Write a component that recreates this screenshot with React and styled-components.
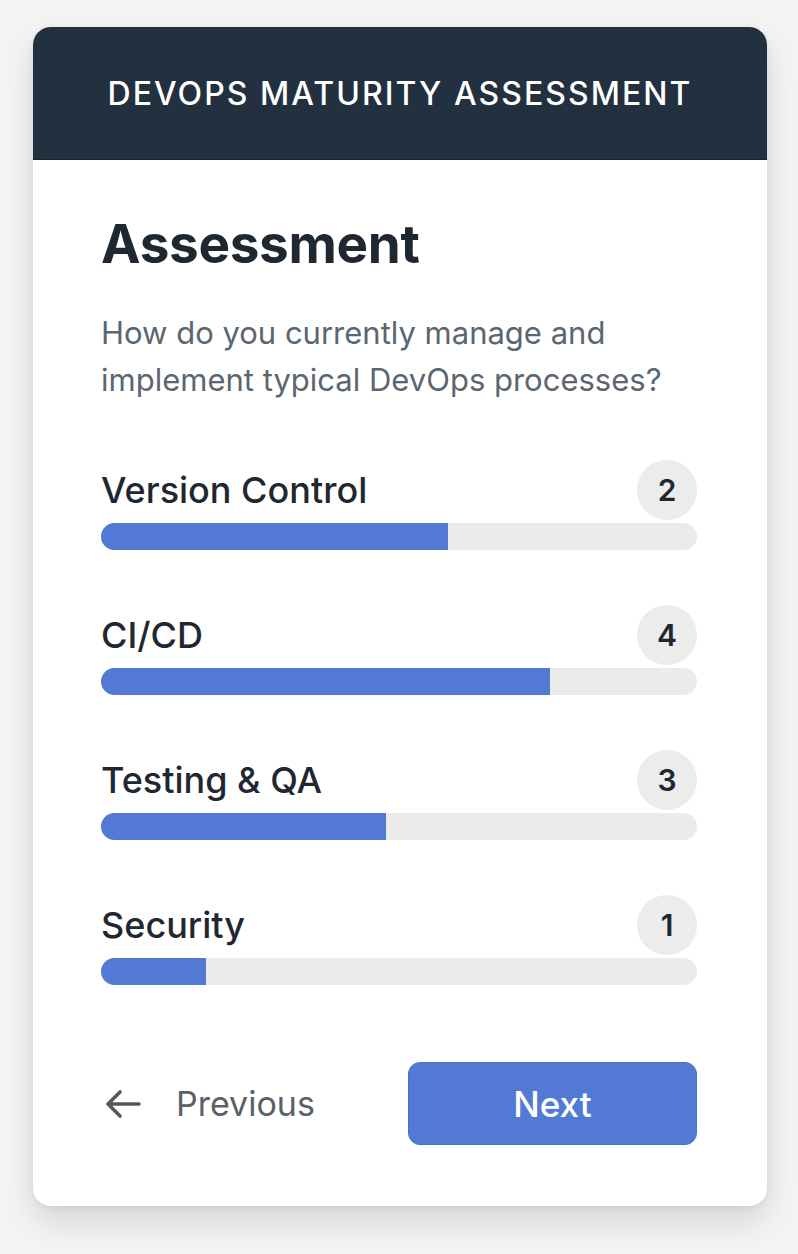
import React from "react";
import styled, { createGlobalStyle } from "styled-components";

const Global = createGlobalStyle`
  html, body { margin: 0; padding: 0; background: #f4f4f3; }
  body { font-family: Inter, "Noto Sans", "Liberation Sans", sans-serif; -webkit-font-smoothing: antialiased; }
  * { box-sizing: border-box; }
`;

const Page = styled.div`
  padding: 27px 31px 49px 33px;
`;

const Card = styled.div`
  width: 734px;
  background: #ffffff;
  border-radius: 18px;
  overflow: hidden;
  box-shadow: 0 16px 34px rgba(0, 0, 0, 0.13), 0 2px 6px rgba(0, 0, 0, 0.06);
`;

const Header = styled.header`
  height: 133px;
  background: #22303f;
  display: flex;
  align-items: center;
  justify-content: center;
  color: #ffffff;
  font-size: 32px;
  font-weight: 500;
  letter-spacing: 2.05px;
  border-bottom: 1px solid #1a2430;
`;

const Body = styled.div`
  padding: 52px 70px 61px 68px;
  display: flex;
  flex-direction: column;
`;

const Title = styled.h1`
  margin: 0;
  font-size: 53px;
  line-height: 64px;
  font-weight: 700;
  color: #1f2731;
  letter-spacing: -0.3px;
`;

const Subtitle = styled.p`
  margin: 33px 0 0;
  font-size: 31px;
  line-height: 47px;
  color: #5b6670;
  font-weight: 400;
`;

const List = styled.div`
  margin-top: 57px;
  display: flex;
  flex-direction: column;
  gap: 55px;
`;

const Row = styled.div`
  display: flex;
  flex-direction: column;
  gap: 3px;
`;

const RowHead = styled.div`
  display: flex;
  align-items: center;
  justify-content: space-between;
  height: 60px;
`;

const Label = styled.span`
  font-size: 36px;
  font-weight: 500;
  color: #1f2731;
  letter-spacing: 0;
`;

const Badge = styled.span`
  width: 60px;
  height: 60px;
  border-radius: 50%;
  background: #ececec;
  display: flex;
  align-items: center;
  justify-content: center;
  font-size: 30px;
  font-weight: 600;
  color: #1f2731;
`;

const Track = styled.div`
  height: 27px;
  border-radius: 14px;
  background: #ebebeb;
  overflow: hidden;
`;

const Fill = styled.div`
  height: 100%;
  background: #527ad4;
`;

const Footer = styled.div`
  margin-top: 77px;
  display: flex;
  align-items: center;
  justify-content: space-between;
`;

const PrevButton = styled.button`
  border: none;
  background: none;
  padding: 0 0 0 4px;
  display: flex;
  align-items: center;
  gap: 35px;
  font-family: inherit;
  font-size: 34px;
  color: #5b6068;
  cursor: pointer;
`;

const NextButton = styled.button`
  width: 289px;
  height: 83px;
  border: 1px solid #4a70cc;
  border-radius: 12px;
  background: #527ad4;
  color: #ffffff;
  font-family: inherit;
  font-size: 35px;
  font-weight: 500;
  cursor: pointer;
`;

const items = [
  { label: "Version Control", score: 2, pct: 58.3 },
  { label: "CI/CD", score: 4, pct: 75.4 },
  { label: "Testing & QA", score: 3, pct: 47.9 },
  { label: "Security", score: 1, pct: 17.6 },
];

const ArrowLeft = () => (
  <svg width="36" height="28" viewBox="0 0 36 28" fill="none">
    <path
      d="M34 14H3M15 2L3 14l12 12"
      stroke="#55595f"
      strokeWidth="3.6"
      strokeLinecap="round"
      strokeLinejoin="round"
    />
  </svg>
);

export default function App() {
  return (
    <>
      <Global />
      <Page>
        <Card>
          <Header>DEVOPS MATURITY ASSESSMENT</Header>
          <Body>
            <Title>Assessment</Title>
            <Subtitle>
              How do you currently manage and
              <br />
              implement typical DevOps processes?
            </Subtitle>
            <List>
              {items.map((it) => (
                <Row key={it.label}>
                  <RowHead>
                    <Label>{it.label}</Label>
                    <Badge>{it.score}</Badge>
                  </RowHead>
                  <Track>
                    <Fill style={{ width: `${it.pct}%` }} />
                  </Track>
                </Row>
              ))}
            </List>
            <Footer>
              <PrevButton>
                <ArrowLeft />
                Previous
              </PrevButton>
              <NextButton>Next</NextButton>
            </Footer>
          </Body>
        </Card>
      </Page>
    </>
  );
}
